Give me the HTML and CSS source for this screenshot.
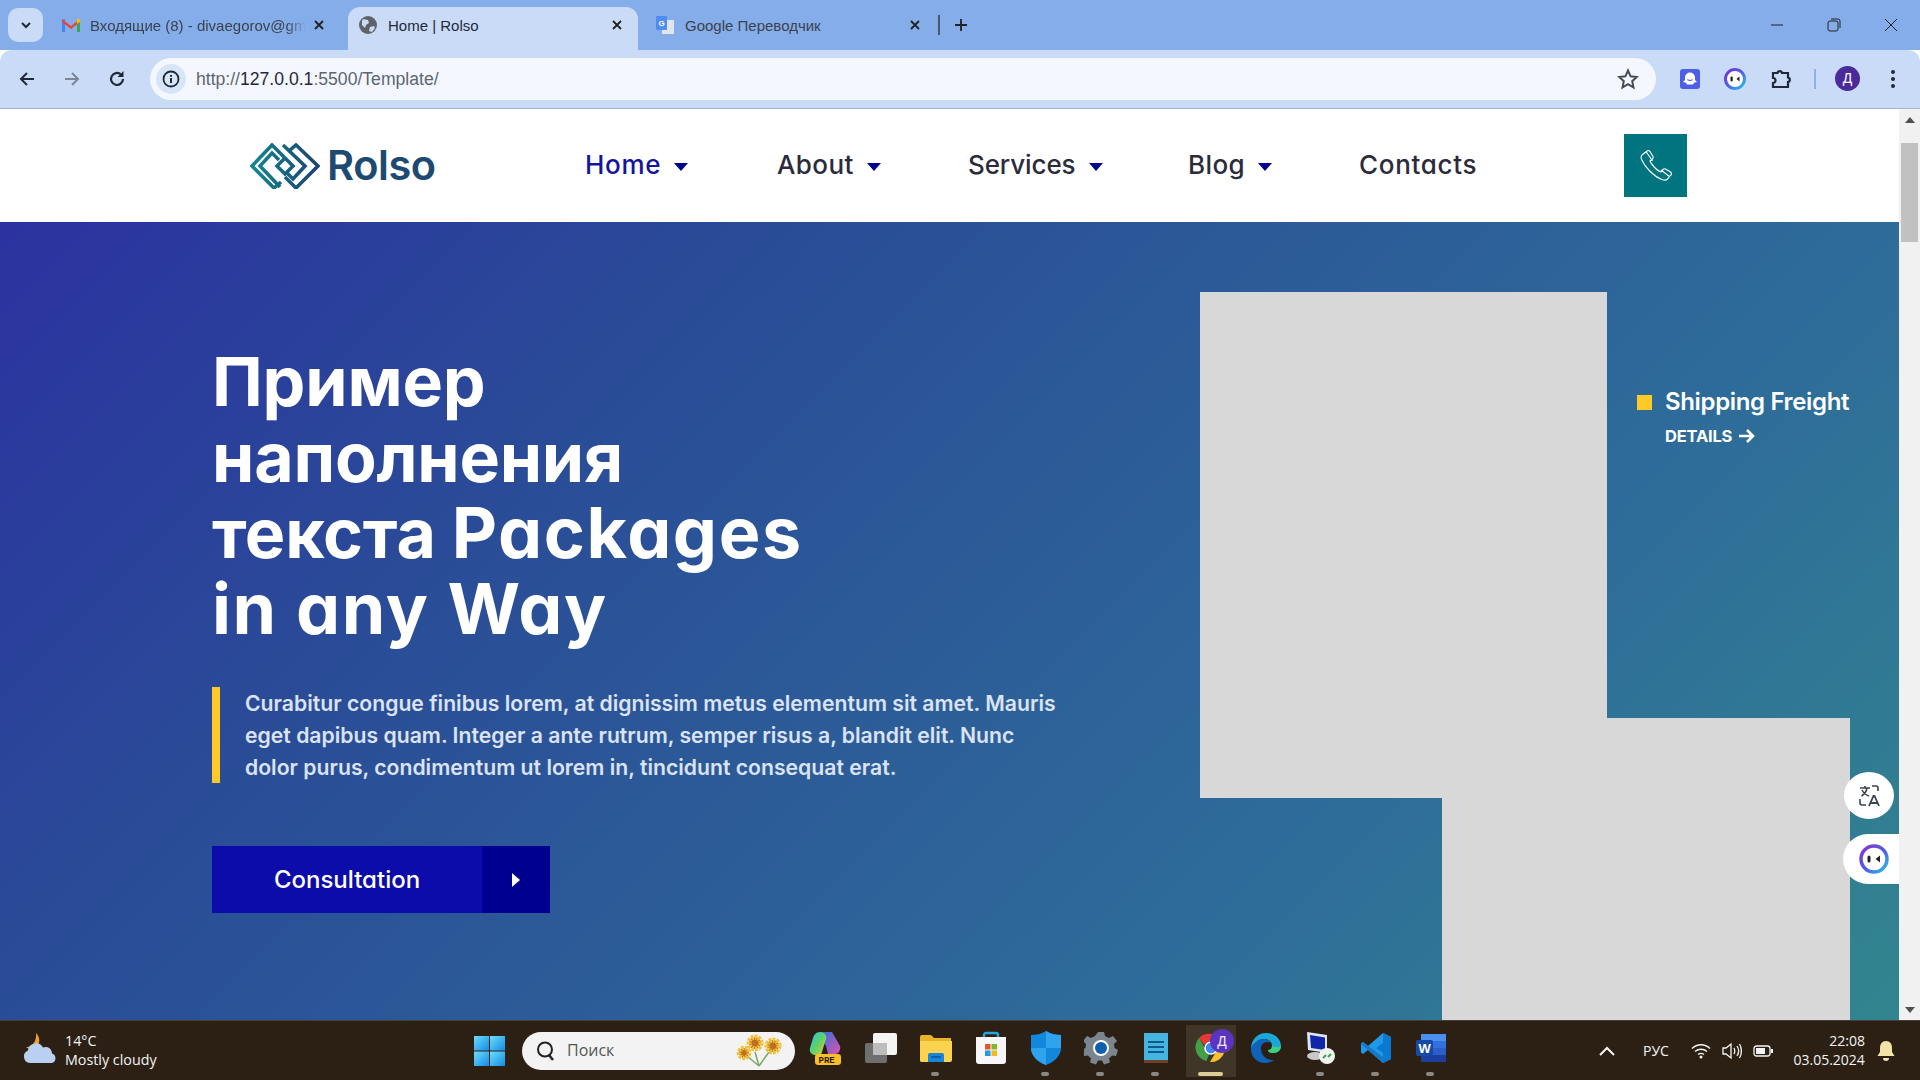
FILE: index.html
```html
<!DOCTYPE html>
<html lang="ru">
<head>
<meta charset="utf-8">
<title>Home | Rolso</title>
<link rel="stylesheet" href="styles.css">
</head>
<body>
<div class="screen">
  <div class="tabstrip">
    <div class="tabmenu"><svg width="14" height="14" viewBox="0 0 14 14"><path d="M3 5l4 4 4-4" fill="none" stroke="#1f2937" stroke-width="2"/></svg></div>
    <div class="tab tab-gmail">
      <svg class="fav" width="20" height="16" viewBox="0 0 20 16"><path d="M1 15V3l3-1 0 13z" fill="#4285f4"/><path d="M19 15V3l-3-1 0 13z" fill="#34a853"/><path d="M1 2l9 7 9-7v3l-9 7-9-7z" fill="#ea4335"/><path d="M16 2l3 0v3l-3 2z" fill="#fbbc04"/></svg>
      <span class="tabtext">Входящие (8) - divaegorov@gm</span>
      <svg class="tabx" width="12" height="12" viewBox="0 0 12 12"><path d="M2 2l8 8M10 2l-8 8" stroke="#222" stroke-width="1.8"/></svg>
    </div>
    <div class="tab tab-active">
      <svg class="fav" width="18" height="18" viewBox="0 0 18 18"><circle cx="9" cy="9" r="9" fill="#5f6368"/><path d="M4 3l5 1 1 3-3 2-1 3-3-3 0-4zM11 11l4-1 1 2-3 4-3-1z" fill="#c9dbf7"/></svg>
      <span class="tabtext">Home | Rolso</span>
      <svg class="tabx" width="12" height="12" viewBox="0 0 12 12"><path d="M2 2l8 8M10 2l-8 8" stroke="#222" stroke-width="1.8"/></svg>
    </div>
    <div class="tab tab-translate">
      <svg class="fav" width="20" height="20" viewBox="0 0 20 20"><rect x="7" y="5" width="12" height="14" fill="#dfe6ee"/><rect x="1" y="1" width="11" height="14" rx="1" fill="#4f8df5"/><text x="3.5" y="11" class="favg">G</text></svg>
      <span class="tabtext">Google Переводчик</span>
      <svg class="tabx" width="12" height="12" viewBox="0 0 12 12"><path d="M2 2l8 8M10 2l-8 8" stroke="#222" stroke-width="1.8"/></svg>
    </div>
    <div class="tabsep"></div>
    <svg class="newtab" width="14" height="14" viewBox="0 0 14 14"><path d="M7 1v12M1 7h12" stroke="#222" stroke-width="1.8"/></svg>
    <div class="winctl">
      <svg width="14" height="14" viewBox="0 0 14 14"><path d="M1 7h12" stroke="#222" stroke-width="1"/></svg>
      <svg width="14" height="14" viewBox="0 0 14 14"><rect x="1" y="3" width="10" height="10" rx="2" fill="none" stroke="#222"/><path d="M4 1h7a2 2 0 0 1 2 2v7" fill="none" stroke="#222"/></svg>
      <svg width="14" height="14" viewBox="0 0 14 14"><path d="M1 1l12 12M13 1L1 13" stroke="#222" stroke-width="1"/></svg>
    </div>
  </div>

  <div class="toolbar">
    <svg class="navbtn" width="18" height="18" viewBox="0 0 18 18"><path d="M16 9H3M9 3L3 9l6 6" fill="none" stroke="#1f2937" stroke-width="2"/></svg>
    <svg class="navbtn" width="18" height="18" viewBox="0 0 18 18"><path d="M2 9h13M9 3l6 6-6 6" fill="none" stroke="#7b8794" stroke-width="2"/></svg>
    <svg class="navbtn" width="18" height="18" viewBox="0 0 18 18"><path d="M15 9a6 6 0 1 1-2-4.500" fill="none" stroke="#1f2937" stroke-width="2.200"/><path d="M15.500 1v6H9.500z" fill="#1f2937"/></svg>
    <div class="omnibox">
      <div class="siteinfo"><svg width="18" height="18" viewBox="0 0 18 18"><circle cx="9" cy="9" r="7.500" fill="none" stroke="#1f2937" stroke-width="1.800"/><path d="M9 8v5M9 5v1.800" stroke="#1f2937" stroke-width="2"/></svg></div>
      <div class="url">http://<b>127.0.0.1</b>:5500/Template/</div>
      <svg class="star" width="22" height="22" viewBox="0 0 22 22"><path d="M11 2.500l2.600 5.800 6.200.700-4.600 4.200 1.300 6.200L11 16.200 5.500 19.400l1.300-6.200L2.200 9l6.200-.7z" fill="none" stroke="#444c56" stroke-width="2"/></svg>
    </div>
    <div class="ext ext-ghost"><svg width="20" height="20" viewBox="0 0 20 20"><rect width="20" height="20" rx="3" fill="#4d5fe8"/><path d="M10 3.500a5 5 0 0 1 5 5v2.500l2 2-3 .8-1 1.700h-6l-1-1.700-3-.8 2-2V8.500a5 5 0 0 1 5-5z" fill="#fff"/><path d="M7.500 10.500q2.500 2 5 0" fill="none" stroke="#4d5fe8" stroke-width="1.200"/></svg></div>
    <div class="ext ext-face"><svg width="22" height="22" viewBox="0 0 22 22"><defs><linearGradient id="fg" x1="0" y1="0" x2="1" y2="1"><stop offset="0" stop-color="#7b2fd0"/><stop offset=".5" stop-color="#4d5fe8"/><stop offset="1" stop-color="#2cc4e8"/></linearGradient></defs><circle cx="11" cy="11" r="9.500" fill="#fff" stroke="url(#fg)" stroke-width="3"/><rect x="6.500" y="8.500" width="2.200" height="5" rx="1" fill="#222"/><path d="M15.500 8.500L12.500 11l3 2.500z" fill="#222"/></svg></div>
    <div class="ext ext-puzzle"><svg width="22" height="22" viewBox="0 0 22 22"><path d="M3 5h4.500a2.300 2.300 0 0 1 4.500 0H18v4.500a2.300 2.300 0 0 1 0 4.500V19H3v-4a2.500 2.500 0 0 0 0-5z" fill="none" stroke="#1f2937" stroke-width="2.200"/></svg></div>
    <div class="toolsep"></div>
    <div class="avatar">Д</div>
    <svg class="dots" width="6" height="20" viewBox="0 0 6 20"><circle cx="3" cy="3" r="2" fill="#1f2937"/><circle cx="3" cy="10" r="2" fill="#1f2937"/><circle cx="3" cy="17" r="2" fill="#1f2937"/></svg>
  </div>

  <div class="viewport">
    <div class="page">
      <header class="siteheader">
        <div class="logo">
          <svg width="70" height="46" viewBox="0 0 70 46">
            <defs><linearGradient id="lg" gradientUnits="userSpaceOnUse" x1="0" y1="0" x2="70" y2="0"><stop offset="0" stop-color="#128a8f"/><stop offset="1" stop-color="#1c3f70"/></linearGradient></defs>
            <g fill="none" stroke="url(#lg)" stroke-width="3.600">
              <path d="M31 39l-7 6L2 23 22 2l12 12"/>
              <path d="M30 44L10 23l12-13 7 7"/>
              <path d="M35 15l8 8-8 8-8-8z"/>
              <path d="M33 2l22 21-12 13-7-7"/>
              <path d="M39 8l7-6 22 21-22 22-11-11"/>
            </g>
          </svg>
          <span class="logotext">Rolso</span>
        </div>
        <nav class="mainnav">
          <a class="navitem navitem-current">Home<i class="caret"></i></a>
          <a class="navitem">About<i class="caret"></i></a>
          <a class="navitem">Services<i class="caret"></i></a>
          <a class="navitem">Blog<i class="caret"></i></a>
          <a class="navitem">Contacts</a>
        </nav>
        <div class="phonebtn"><svg width="34" height="34" viewBox="0 0 34 34"><path d="M3 6l5-4c1-1 2-.5 3 .5l3 5c.5 1 0 2-1 3l-2 1.500c1 3 7 10 11 11l1.500-2c1-1 2-1.500 3-1l5 3c1 1 1.500 2 .5 3l-4 4.500c-1 .7-3 .7-5 0C14 27 6 18 2.500 10.500c-.7-2-.5-3.500.5-4.500zM7 2.500l6.500 9.500M22 21l9 7" fill="none" stroke="#fff" stroke-width="1.100"/></svg></div>
      </header>

      <section class="hero">
        <div class="herotext">
          <h1 class="herotitle">Пример<br>наполнения<br>текста <span class="latin">Packages</span><br><span class="latin">in any Way</span></h1>
          <p class="herolead">Curabitur congue finibus lorem, at dignissim metus elementum sit amet. Mauris eget dapibus quam. Integer a ante rutrum, semper risus a, blandit elit. Nunc dolor purus, condimentum ut lorem in, tincidunt consequat erat.</p>
          <div class="cta"><span class="ctalabel">Consultation</span><span class="ctaicon"><i class="ctaarrow"></i></span></div>
        </div>
        <div class="heromedia">
          <div class="photo photo-a"></div>
          <div class="photo photo-b"></div>
          <div class="service">
            <div class="servicename"><i class="bullet"></i>Shipping Freight</div>
            <div class="servicelink">DETAILS <svg width="18" height="16" viewBox="0 0 18 16"><path d="M1 8h14M9 2l6 6-6 6" fill="none" stroke="#fff" stroke-width="2.600"/></svg></div>
          </div>
        </div>
      </section>
    </div>

    <div class="scrollbar">
      <i class="sb-up"></i>
      <div class="sb-track"><div class="sb-thumb"></div></div>
      <i class="sb-down"></i>
    </div>

    <div class="bubble bubble-translate"><svg width="24" height="24" viewBox="0 0 24 24"><path d="M3 4h10M8 2v2M4.500 12c3-2 5-5 5.500-8M5 6c1.500 3 4 5 7 6" fill="none" stroke="#3c4350" stroke-width="1.600"/><path d="M15 2h4a2 2 0 0 1 2 2v3M3 15v4a2 2 0 0 0 2 2h4" fill="none" stroke="#3c4350" stroke-width="1.600"/><path d="M12 22l4.500-10h1L22 22M13.500 19h7" fill="none" stroke="#3c4350" stroke-width="1.800"/></svg></div>
    <div class="bubble bubble-face"><svg width="30" height="30" viewBox="0 0 30 30"><defs><linearGradient id="fg2" x1="0" y1="0" x2="1" y2="1"><stop offset="0" stop-color="#8a2fd0"/><stop offset=".55" stop-color="#4d5fe8"/><stop offset="1" stop-color="#2cc4e8"/></linearGradient></defs><circle cx="15" cy="15" r="13" fill="#fff" stroke="url(#fg2)" stroke-width="3.500"/><rect x="8.500" y="11.500" width="3" height="7" rx="1.500" fill="#222"/><path d="M21 11.500L16.500 15l4.500 3.500z" fill="#222"/></svg></div>
  </div>

  <footer class="taskbar">
    <div class="tb-left">
      <svg class="weathericon" width="36" height="36" viewBox="0 0 36 36"><path d="M14 2c5 5 4 12-1 15-3 2-7 1-9-1 6 1 11-6 10-14z" fill="#f0a030"/><path d="M8 32a6.500 6.500 0 0 1-2-12.500 8 8 0 0 1 15-3 6.500 6.500 0 0 1 9 6 5 5 0 0 1 0 9.500z" fill="#b9d0f2"/></svg>
      <div class="weather"><span>14°C</span><span>Mostly cloudy</span></div>
    </div>
    <div class="tb-center">
      <svg class="startbtn" width="32" height="30" viewBox="0 0 32 30"><defs><linearGradient id="wg" x1="0" y1="0" x2="1" y2="1"><stop offset="0" stop-color="#6fdcf8"/><stop offset="1" stop-color="#128de8"/></linearGradient></defs><rect width="15" height="14.500" fill="url(#wg)"/><rect x="16" width="15" height="14.500" fill="url(#wg)"/><rect y="15.500" width="15" height="14.500" fill="url(#wg)"/><rect x="16" y="15.500" width="15" height="14.500" fill="url(#wg)"/></svg>
      <div class="search">
        <svg width="22" height="22" viewBox="0 0 22 22"><circle cx="10" cy="9.500" r="7" fill="none" stroke="#222" stroke-width="2"/><path d="M14 15l4 5" stroke="#222" stroke-width="2.400"/></svg>
        <span class="searchtext">Поиск</span>
        <svg class="flowers" width="50" height="36" viewBox="0 0 50 36"><path d="M24 34l-4-14M24 34l10-14M24 34l-12-10" stroke="#7fa66a" stroke-width="1.500"/><g fill="#b9721d" stroke="#f3c03c" stroke-dasharray="2.400 1"><circle cx="20" cy="11" r="6" stroke-width="5"/><circle cx="38" cy="14" r="6" stroke-width="5"/><circle cx="9" cy="21" r="5" stroke-width="4.500"/></g></svg>
      </div>
      <div class="pins">
        <div class="pin"><svg width="36" height="36" viewBox="0 0 36 36"><defs><linearGradient id="cp1" x1="0" y1="0" x2="1" y2="1"><stop offset="0" stop-color="#2bc0e8"/><stop offset=".5" stop-color="#5ad36a"/><stop offset="1" stop-color="#f6c338"/></linearGradient><linearGradient id="cp2" x1="0" y1="0" x2="1" y2="1"><stop offset="0" stop-color="#2d6fe0"/><stop offset="1" stop-color="#e052b0"/></linearGradient></defs><path d="M12 2h12l8 14c1 3-1 8-5 8h-7l-2-8-4-7z" fill="url(#cp2)"/><path d="M12 2c-4 0-6 3-7 6L2 18c-1 3 1 7 5 7h6l5-16c1-3-1-7-6-7z" fill="url(#cp1)"/><rect x="7" y="24" width="26" height="11" rx="3" fill="#f8bf2a"/><text x="10.500" y="33" class="prelabel">PRE</text></svg></div>
        <div class="pin"><svg width="34" height="32" viewBox="0 0 34 32"><rect x="1" y="11" width="22" height="20" rx="2" fill="#6f6f6f"/><rect x="9" y="1" width="24" height="22" rx="2" fill="#f4f4f4"/><rect x="9" y="11" width="14" height="12" fill="#bdbdbd"/></svg></div>
        <div class="pin has-dot"><svg width="34" height="30" viewBox="0 0 34 30"><path d="M1 4a2 2 0 0 1 2-2h9l3 3h17v22a2 2 0 0 1-2 2H3a2 2 0 0 1-2-2z" fill="#e8b42c"/><path d="M1 8h32v19a2 2 0 0 1-2 2H3a2 2 0 0 1-2-2z" fill="#fcd34f"/><path d="M9 29v-7a2 2 0 0 1 2-2h12a2 2 0 0 1 2 2v7z" fill="#1a84d8"/><rect x="12" y="23" width="10" height="2" fill="#0c5ca8"/></svg></div>
        <div class="pin"><svg width="32" height="34" viewBox="0 0 32 34"><path d="M9 8V4a2 2 0 0 1 2-2h10a2 2 0 0 1 2 2v4" fill="none" stroke="#25a5d8" stroke-width="2.400"/><path d="M1 6h30v24a3 3 0 0 1-3 3H4a3 3 0 0 1-3-3z" fill="#f7f7f7"/><rect x="10" y="13" width="5.500" height="5.500" fill="#e8552a"/><rect x="16.500" y="13" width="5.500" height="5.500" fill="#7cbb2b"/><rect x="10" y="19.500" width="5.500" height="5.500" fill="#1f9ae8"/><rect x="16.500" y="19.500" width="5.500" height="5.500" fill="#f8b81c"/></svg></div>
        <div class="pin has-dot"><svg width="32" height="36" viewBox="0 0 32 36"><path d="M16 1c5 3 10 4 15 4v13c0 8-7 14-15 17C8 32 1 26 1 18V5c5 0 10-1 15-4z" fill="#1288dc"/><path d="M16 1c5 3 10 4 15 4v13H16zM16 18v17C8 32 1 26 1 18z" fill="#2ea3ee"/></svg></div>
        <div class="pin has-dot"><svg width="34" height="34" viewBox="0 0 34 34"><path d="M14 1h6l1 4 4 2 4-2 4 5-3 3 .5 4 3.500 2-2 6-4-.5-3 3 1 4-6 2-2-4h-4l-2 4-6-2 1-4-3-3-4 .5-2-6 3.500-2 .5-4-3-3 4-5 4 2 4-2z" fill="#7b8590"/><circle cx="17" cy="17" r="8" fill="#fff"/><circle cx="17" cy="17" r="6" fill="#0f5fb0"/></svg></div>
        <div class="pin has-dot"><svg width="26" height="32" viewBox="0 0 26 32"><rect x="1" y="1" width="24" height="30" fill="#46b4e0"/><rect x="1" y="28" width="24" height="3" fill="#6b4226"/><path d="M5 10h16M5 15h16M5 20h16" stroke="#0b5a8a" stroke-width="2.200"/></svg></div>
        <div class="pin pin-active"><svg width="34" height="34" viewBox="0 0 34 34"><path d="M17 3a14 14 0 0 1 12 7H17a7 7 0 0 0-6.500 4.500L5 7A14 14 0 0 1 17 3z" fill="#e53935"/><path d="M29 10a14 14 0 0 1-13 21l6-10a7 7 0 0 0 0-11z" fill="#fbc02d"/><path d="M5 7l7 12a7 7 0 0 0 4 2l-3.500 9A14 14 0 0 1 5 7z" fill="#43a047"/><circle cx="17" cy="17" r="6" fill="#4285f4" stroke="#fff" stroke-width="1.500"/></svg><span class="pinbadge">Д</span></div>
        <div class="pin"><svg width="34" height="34" viewBox="0 0 34 34"><path d="M17 2c9 0 15 6 15 13 0 4-3 7-8 7-3 0-5-1-5-3 2 0 4-1 4-4 0-4-3-7-8-7C9 8 4 13 2 18 2 9 8 2 17 2z" fill="#1ba8d8"/><path d="M2 18c2-5 7-10 13-10 3 0 6 1 7 4-3-2-9-1-10 4-1 6 4 14 13 13-3 2-6 3-9 3C8 32 2 26 2 18z" fill="#0f63b8"/><path d="M32 15c0 4-3 7-8 7-3 0-5-1-5-3 2 0 4-1 4-4 4 2 7 1 9 0z" fill="#3dd07d"/></svg></div>
        <div class="pin has-dot"><svg width="34" height="36" viewBox="0 0 34 36"><path d="M3 2l20 3v18L4 20z" fill="#dfe5f2"/><path d="M6 5l15 2.500V20L7 18z" fill="#1027a8"/><ellipse cx="11" cy="26" rx="8" ry="4" fill="#c8c8c8"/><circle cx="23" cy="26" r="8" fill="#f2f2ee"/><path d="M19 28l3-3M27 24l-3 3" stroke="#3aa64a" stroke-width="2"/></svg></div>
        <div class="pin has-dot"><svg width="32" height="32" viewBox="0 0 32 32"><path d="M23 1l8 4v22l-8 4L8 18l-5 4-2-1.500V11.500L3 10l5 4z" fill="#1f9ae8"/><path d="M23 1l8 4v22l-8 4V21l-7-5 7-5z" fill="#0a7ad1"/><path d="M3 10l20 15v6L1 12z" fill="#1878c8"/></svg></div>
        <div class="pin has-dot"><svg width="32" height="30" viewBox="0 0 32 30"><rect x="6" y="1" width="25" height="28" rx="2" fill="#2b5ecb"/><rect x="6" y="1" width="25" height="7" fill="#4a90ec"/><rect x="6" y="8" width="25" height="7" fill="#2f71de"/><rect x="6" y="22" width="25" height="7" fill="#1c3f9e"/><rect x="1" y="7" width="17" height="16" rx="2" fill="#164aa8"/><text x="3.500" y="20" class="wlabel">W</text></svg></div>
      </div>
    </div>
    <div class="tb-right">
      <svg width="16" height="10" viewBox="0 0 16 10"><path d="M1 9l7-7 7 7" fill="none" stroke="#f4f4f4" stroke-width="2"/></svg>
      <span class="lang">РУС</span>
      <svg width="20" height="16" viewBox="0 0 20 16"><path d="M1 5.500c5-5 13-5 18 0M4 8.500c3.500-3 8.500-3 12 0M7 11.500c2-1.500 4-1.500 6 0" fill="none" stroke="#f4f4f4" stroke-width="1.400"/><circle cx="10" cy="14" r="1.500" fill="#f4f4f4"/></svg>
      <svg width="20" height="18" viewBox="0 0 20 18"><path d="M1 6v6h3l5 4V2L4 6z" fill="none" stroke="#f4f4f4" stroke-width="1.300"/><path d="M12 6c1 2 1 4 0 6M15 4c2 3 2 7 0 10M17.500 2c2.500 4 2.500 10 0 14" fill="none" stroke="#f4f4f4" stroke-width="1.300"/></svg>
      <svg width="20" height="12" viewBox="0 0 20 12"><rect x="1" y="1" width="16" height="10" rx="2.500" fill="none" stroke="#f4f4f4" stroke-width="1.300"/><rect x="3" y="3" width="9" height="6" fill="#f4f4f4"/><rect x="18" y="4" width="2" height="4" fill="#f4f4f4"/></svg>
      <div class="clock"><span>22:08</span><span>03.05.2024</span></div>
      <svg width="18" height="22" viewBox="0 0 18 22"><path d="M9 1c4 0 6 3 6 7v4l2.500 4H.5L3 12V8c0-4 2-7 6-7z" fill="#f1e4a6"/><path d="M6 18h6a3 3 0 0 1-6 0z" fill="#f1e4a6"/></svg>
    </div>
  </footer>
</div>
</body>
</html>
```
FILE: styles.css
```css
* { box-sizing: border-box; }
html, body { margin: 0; padding: 0; overflow: hidden; }
.screen { width: 1920px; height: 1080px; display: flex; flex-direction: column; background: #fff; font-family: "Open Sans", "Noto Sans", sans-serif; }

/* tab strip */
.tabstrip { height: 50px; flex: none; background: #85ade9; display: flex; align-items: flex-end; padding-left: 8px; position: relative; }
.tabmenu { width: 35px; height: 34px; margin-bottom: 8px; border-radius: 10px; background: #c9dbf7; display: flex; align-items: center; justify-content: center; }
.tab { height: 43px; display: flex; align-items: center; font-size: 15px; color: #3b4250; font-family: "Liberation Sans", sans-serif; }
.tabtext { flex: 1; white-space: nowrap; min-width: 0; }
.fav { flex: none; }
.favg { font: bold 8px "Liberation Sans", sans-serif; fill: #fff; }
.tabx { flex: none; }
.tab-gmail { width: 305px; padding: 0 0 7px 18px; gap: 9px; }
.tab-gmail .tabtext { width: 218px; flex: none; -webkit-mask-image: linear-gradient(90deg, #000 90%, transparent 99%); }
.tab-gmail .tabx { margin-left: -4px; }
.tab-active { width: 290px; background: #c9dbf7; border-radius: 12px 12px 0 0; padding: 0 15px 7px 11px; gap: 11px; color: #1f2937; }
.tab-translate { width: 300px; padding: 0 17px 7px 17px; gap: 10px; }
.tabsep { width: 2px; height: 20px; background: #3b4250; margin-bottom: 15px; opacity: .8; }
.newtab { margin: 0 0 18px 14px; }
.winctl { margin-left: auto; height: 50px; display: flex; align-items: center; gap: 43px; padding-right: 22px; }

/* toolbar */
.toolbar { height: 59px; flex: none; background: #c9dbf7; border-radius: 12px 12px 0 0; border-bottom: 1px solid #a9b3c2; display: flex; align-items: center; padding: 0 0 0 18px; }
.navbtn { margin-right: 27px; flex: none; }
.navbtn:nth-child(3) { margin-right: 24px; }
.omnibox { width: 1506px; height: 42px; background: #f4f8fe; border-radius: 21px; display: flex; align-items: center; padding: 0 17px 0 6px; }
.siteinfo { width: 30px; height: 30px; border-radius: 50%; background: #d8e5f9; display: flex; align-items: center; justify-content: center; flex: none; }
.url { margin-left: 10px; font: 17.600px "Liberation Sans", sans-serif; color: #5d6570; flex: 1; }
.url b { font-weight: 400; color: #1f2937; }
.ext { width: 22px; height: 22px; display: flex; align-items: center; justify-content: center; flex: none; }
.ext-ghost { margin-left: 23px; }
.ext-face { margin-left: 23px; }
.ext-puzzle { margin-left: 24px; }
.toolsep { width: 2px; height: 20px; background: #8fb0e0; margin-left: 22px; flex: none; }
.avatar { width: 25px; height: 25px; border-radius: 50%; background: #4b2a9b; color: #fff; font: 14px "Liberation Sans", sans-serif; display: flex; align-items: center; justify-content: center; margin: -2px 0 0 19px; flex: none; }
.dots { margin-left: 30px; flex: none; }

/* viewport */
.viewport { flex: 1; min-height: 0; display: flex; position: relative; overflow: hidden; }
.page { flex: 1; min-width: 0; display: flex; flex-direction: column; }
.scrollbar { width: 21px; flex: none; background: #f1f1f1; display: flex; flex-direction: column; align-items: center; padding-top: 8px; }
.sb-up, .sb-down { width: 0; height: 0; border-left: 5px solid transparent; border-right: 5px solid transparent; flex: none; }
.sb-up { border-bottom: 6px solid #505050; }
.sb-down { border-top: 6px solid #505050; margin-bottom: 7px; }
.sb-track { flex: 1; width: 17px; padding-top: 20px; }
.sb-thumb { height: 99px; background: #c1c1c1; }

.siteheader { height: 113px; flex: none; background: #fff; display: flex; align-items: center; padding-left: 250px; }
.logo { display: flex; align-items: center; gap: 8px; width: 335px; }
.logotext { font: 600 41.500px/46px "Inter", sans-serif; color: #1c4a72; letter-spacing: -.4px; margin: -2px 0 0 -1px; }
.mainnav { display: flex; margin-top: -2px; }
.navitem { font: 450 26px "Inter", "Noto Sans", sans-serif; font-feature-settings: "cv11"; color: #2b2b3b; display: flex; align-items: center; letter-spacing: .7px; }
.navitem:nth-child(1) { width: 192px; }
.navitem:nth-child(2) { width: 191px; letter-spacing: .4px; }
.navitem:nth-child(3) { width: 220px; letter-spacing: -.1px; }
.navitem:nth-child(4) { width: 171px; letter-spacing: .4px; }
.navitem:nth-child(5) { width: 265px; }
.navitem-current { color: #14149c; }
.caret { width: 0; height: 0; border-left: 7.500px solid transparent; border-right: 7.500px solid transparent; border-top: 8px solid #000090; margin: 4px 0 0 13px; }
.phonebtn { width: 63px; height: 63px; background: #00757f; display: flex; align-items: center; justify-content: center; flex: none; }

/* hero */
.hero { flex: 1; min-height: 0; overflow: hidden; display: flex; padding: 70px 0 0 212px; background: linear-gradient(135deg, #2b32a0 0%, #2a4d97 30%, #2e6b9a 70%, #32858f 100%); }
.herotext { width: 988px; flex: none; padding-top: 51px; }
.herotitle { margin: 0; font: 700 68px/76px "Inter", sans-serif; color: #fff; letter-spacing: -.2px; white-space: nowrap; }
.latin { font-feature-settings: "cv11"; font-size: 70px; letter-spacing: 1.600px; font-weight: 700; }
.herolead { margin: 40px 0 0; width: 858px; height: 96px; border-left: 8px solid #ffca28; padding-left: 25px; font: 600 21.200px/32px "Inter", sans-serif; color: #dbe3f2; }
.cta { margin-top: 63px; width: 338px; height: 67px; display: flex; background: #0c0cab; color: #fff; }
.ctalabel { width: 270px; display: flex; align-items: center; justify-content: center; font: 500 24px "Inter", sans-serif; font-feature-settings: "cv11"; }
.ctaicon { flex: 1; background: #000090; display: flex; align-items: center; justify-content: center; }
.ctaarrow { width: 0; height: 0; border-left: 8px solid #fff; border-top: 7px solid transparent; border-bottom: 7px solid transparent; }
.heromedia { flex: none; display: grid; grid-template-columns: 242px 165px 243px; grid-template-rows: 426px 80px 300px; }
.photo { background: #d8d8d8; }
.photo-a { grid-column: 1 / 3; grid-row: 1 / 3; }
.photo-b { grid-column: 2 / 4; grid-row: 2 / 4; }
.service { grid-column: 3; grid-row: 1; padding: 93px 0 0 30px; color: #fff; }
.servicename { display: flex; align-items: center; font: 600 24px/34px "Inter", sans-serif; white-space: nowrap; margin-right: -40px; letter-spacing: -.35px; }
.bullet { width: 15px; height: 15px; background: #ffca28; margin-right: 13px; flex: none; }
.servicelink { margin: 5px 0 0 28px; font: 700 16.500px/24px "Inter", sans-serif; display: flex; align-items: center; gap: 6px; letter-spacing: -.2px; }

/* floating extension bubbles */
.bubble { position: absolute; background: #fff; display: flex; align-items: center; }
.bubble-translate { left: 1844px; top: 663px; width: 50px; height: 47px; border-radius: 50%; justify-content: center; }
.bubble-face { left: 1843px; top: 725px; width: 56px; height: 50px; border-radius: 25px 0 0 25px; padding-left: 16px; }

/* taskbar */
.taskbar { height: 60px; flex: none; background: #2c2015; border-top: 1px solid #45403a; display: flex; align-items: center; color: #f4f4f4; font: 14.500px/19px "Open Sans", sans-serif; }
.tb-left { width: 474px; flex: none; display: flex; align-items: center; padding-left: 22px; gap: 7px; }
.weathericon { margin-top: -4px; }
.weather { display: flex; flex-direction: column; font-size: 14.300px; padding-bottom: 2px; }
.tb-center { width: 1108px; flex: none; display: flex; align-items: center; }
.startbtn { flex: none; }
.search { margin-left: 16px; width: 273px; height: 38px; border-radius: 19px; background: #f3f3f3; display: flex; align-items: center; padding: 0 10px 0 13px; color: #555; flex: none; }
.searchtext { margin-left: 10px; font-size: 16px; flex: 1; }
.flowers { margin-top: -2px; }
.pins { display: flex; margin-left: 3px; }
.pin { width: 55px; height: 52px; flex: none; display: flex; align-items: center; justify-content: center; position: relative; padding-bottom: 6px; }
.has-dot::after { content: ""; position: absolute; left: 23px; bottom: 1px; width: 8px; height: 4px; border-radius: 2px; background: #8c8780; }
.pin-active { background: linear-gradient(#3f3628, #3f3628) center / 50px 100% no-repeat; }
.pin-active::after { content: ""; position: absolute; left: 15px; bottom: 1px; width: 25px; height: 4px; border-radius: 2px; background: #dccd95; }
.pinbadge { position: absolute; left: 27px; top: 4px; width: 24px; height: 24px; border-radius: 50%; background: #5a34c0; color: #f0e8ff; font: 14px/24px "Liberation Sans", sans-serif; text-align: center; }
.prelabel { font: 700 9px "Liberation Mono", monospace; fill: #2c2015; }
.wlabel { font: 700 13px "Liberation Sans", sans-serif; fill: #fff; }
.tb-right { flex: 1; display: flex; align-items: center; padding-left: 17px; }
.lang { margin: 0 22px 0 17px; font-size: 14px; }
.tb-right svg { flex: none; margin-right: 11px; }
.clock { display: flex; flex-direction: column; align-items: flex-end; width: 81px; margin: 0 12px 0 0; font-size: 14px; padding-bottom: 2px; }
```
